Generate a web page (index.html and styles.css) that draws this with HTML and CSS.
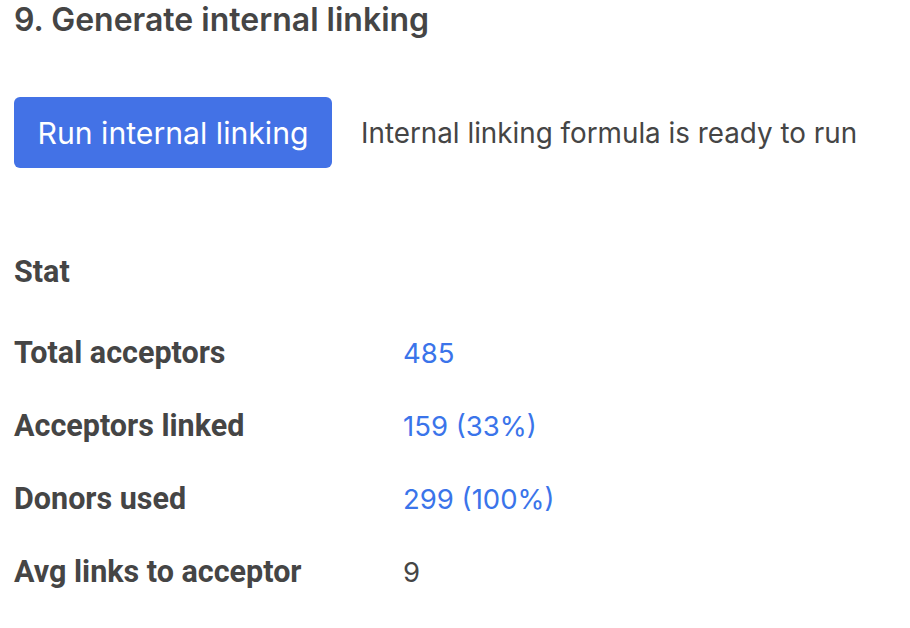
FILE: index.html
```html
<!DOCTYPE html>
<html lang="en">
<head>
    <meta charset="UTF-8">
    <meta name="viewport" content="width=device-width, initial-scale=1.0">
    <title>Generate internal linking</title>
    <link rel="stylesheet" href="styles.css">
</head>
<body>
    <div class="section">
        <h2 class="title">9. Generate internal linking</h2>

        <div class="run-row">
            <button class="btn">Run internal linking</button>
            <span class="status">Internal linking formula is ready to run</span>
        </div>

        <div class="stats">
            <div class="label head">Stat</div>
            <div class="value"></div>

            <div class="label">Total acceptors</div>
            <div class="value link">485</div>

            <div class="label">Acceptors linked</div>
            <div class="value link">159 (33%)</div>

            <div class="label">Donors used</div>
            <div class="value link">299 (100%)</div>

            <div class="label">Avg links to acceptor</div>
            <div class="value">9</div>
        </div>
    </div>
</body>
</html>
```

FILE: styles.css
```css
body {
    font-family: Inter, "Noto Sans", sans-serif;
    background: white;
    color: #454545;
    margin: 0;
    padding: 0 14px;
}

.title {
    font-size: 32px;
    font-weight: 600;
    line-height: 40px;
    margin: 0;
}

.run-row {
    display: flex;
    align-items: center;
    gap: 29px;
    margin-top: 57px;
}

.btn {
    font-family: Inter, "Noto Sans", sans-serif;
    background: #4372e6;
    color: white;
    border: none;
    border-radius: 6px;
    width: 318px;
    height: 71px;
    padding: 0;
    font-size: 30.2px;
    cursor: pointer;
}

.status {
    font-size: 27.8px;
}

.stats {
    display: grid;
    grid-template-columns: 389px auto;
    grid-auto-rows: 73px;
    align-items: center;
    margin-top: 75px;
}

.label {
    font-family: Roboto, "Liberation Sans", sans-serif;
    font-weight: 700;
    font-size: 30.5px;
}

.label.head {
    margin-bottom: 16px;
}

.value {
    font-size: 27.5px;
}

.value.link {
    color: #3a74ea;
}
```
